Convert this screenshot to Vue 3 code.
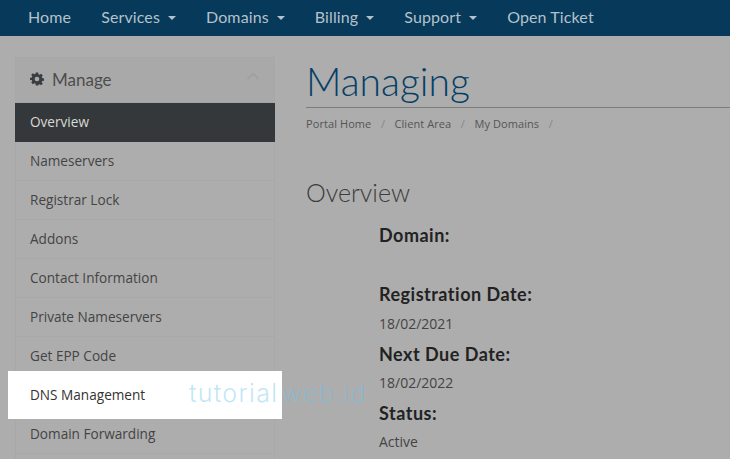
<script setup>
const nav = [
  { label: 'Home' },
  { label: 'Services', caret: true },
  { label: 'Domains', caret: true },
  { label: 'Billing', caret: true },
  { label: 'Support', caret: true },
  { label: 'Open Ticket' },
]
const items = ['Nameservers', 'Registrar Lock', 'Addons', 'Contact Information', 'Private Nameservers', 'Get EPP Code', 'DNS Management', 'Domain Forwarding']
const crumbs = ['Portal Home', 'Client Area', 'My Domains']
const details = [
  { label: 'Domain:', value: '' },
  { label: 'Registration Date:', value: '18/02/2021' },
  { label: 'Next Due Date:', value: '18/02/2022' },
  { label: 'Status:', value: 'Active' },
]
</script>

<template>
  <div class="page">
    <nav class="topnav">
      <a v-for="n in nav" :key="n.label" class="navlink">
        {{ n.label }}<span v-if="n.caret" class="caret"></span>
      </a>
    </nav>
    <div class="body">
      <aside class="side">
        <div class="panel-head">
          <svg class="gear" viewBox="0 0 24 24" width="14" height="14">
            <path fill="#3a3d40" fill-rule="evenodd" d="M10 1h4l.6 3.1 1.9.8 2.6-1.8 2.8 2.8-1.8 2.6.8 1.9 3.1.6v4l-3.1.6-.8 1.9 1.8 2.6-2.8 2.8-2.6-1.8-1.9.8L14 23h-4l-.6-3.1-1.9-.8-2.6 1.8-2.8-2.8 1.8-2.6-.8-1.9L0 14v-4l3.1-.6.8-1.9L2.1 4.9l2.8-2.8 2.6 1.8 1.9-.8zM12 8a4 4 0 1 0 0 8 4 4 0 0 0 0-8z"/>
          </svg>
          <span class="panel-title">Manage</span>
          <svg class="chev" viewBox="0 0 14 8" width="14" height="8">
            <path d="M1.5 7 7 1.8 12.5 7" fill="none" stroke="#a0a0a0" stroke-width="2"/>
          </svg>
        </div>
        <div class="item active">Overview</div>
        <div v-for="i in items" :key="i" class="item" :class="{ lit: i === 'DNS Management' }">
          <span>{{ i }}</span>
        </div>
      </aside>
      <main class="main">
        <h1 class="title">Managing</h1>
        <div class="crumbs">
          <template v-for="c in crumbs" :key="c">
            <span>{{ c }}</span><span class="sep">/</span>
          </template>
        </div>
        <h2 class="sub">Overview</h2>
        <div class="details">
          <div v-for="d in details" :key="d.label" class="detail">
            <div class="label">{{ d.label }}</div>
            <div class="value">{{ d.value }}</div>
          </div>
        </div>
      </main>
    </div>
    <div class="mark">tutorial web.id</div>
  </div>
</template>

<style>
html, body { margin: 0; background: #adadad; overflow: hidden; }
</style>

<style scoped>
.page { position: relative; width: 730px; height: 459px; overflow: hidden; background: #adadad; font-family: "Open Sans", sans-serif; color: #333; }
.topnav { height: 36px; background: #07395a; display: flex; align-items: center; padding-left: 28px; gap: 30px; }
.navlink { font-family: Lato, sans-serif; font-size: 16px; letter-spacing: .12px; color: #b4c2cb; display: flex; align-items: center; white-space: nowrap; padding-bottom: 3px; }
.caret { margin-left: 8px; margin-top: 3px; border-left: 4px solid transparent; border-right: 4px solid transparent; border-top: 4px solid #b4c2cb; }
.body { display: flex; padding: 21px 0 0 15px; gap: 31px; }
.side { width: 260px; flex: none; border-right: 1px solid #a8a8a8; border-left: 1px solid #a8a8a8; box-sizing: border-box; }
.panel-head { height: 46px; box-sizing: border-box; background: #a9a9a9; border-top: 1px solid #a6a6a6; display: flex; align-items: center; padding: 0 14px 2px; gap: 8px; border-bottom: 1px solid #a4a4a4; }
.panel-title { font-family: Lato, sans-serif; font-size: 17px; color: #4d4d4d; flex: 1; }
.chev { margin-bottom: 6px; }
.item { height: 39px; box-sizing: border-box; display: flex; align-items: center; padding: 0 0 2px 14px; font-size: 13.6px; color: #444; border-bottom: 1px solid #a8a8a8; }
.item.active { background: #35383a; color: #d8d8d8; margin: 0 -1px; padding-left: 15px; border-bottom: none; }
.item.lit { position: relative; z-index: 1; height: 48px; background: #fff; color: #333; margin: -5px -8px -4px -8px; padding-left: 22px; border: none; width: 274px; }
.main { flex: 1; min-width: 0; }
.title { margin: 0; height: 51px; box-sizing: border-box; font-family: Lato, sans-serif; font-weight: 300; font-size: 39px; line-height: 48px; color: #053f66; border-bottom: 1px solid #7c7c7c; }
.crumbs { margin-top: 8px; font-size: 11px; letter-spacing: .08px; line-height: 16px; color: #555; display: flex; gap: 9.5px; }
.sep { color: #888; }
.sub { margin: 44px 0 0; font-family: Lato, sans-serif; font-weight: 300; font-size: 25px; line-height: 32px; color: #3c3c3c; }
.details { margin: 15px 0 0 73px; }
.label { font-family: Lato, sans-serif; font-weight: 700; font-size: 18px; letter-spacing: .5px; line-height: 24px; color: #222; }
.value { font-size: 14px; line-height: 20px; min-height: 20px; color: #444; margin-top: 7.5px; }
.detail { margin-bottom: 7.8px; }
.mark { position: absolute; left: 189px; top: 378px; z-index: 2; font-family: Inter, sans-serif; font-weight: 300; font-size: 25px; letter-spacing: 1.3px; word-spacing: -5px; color: rgba(105, 195, 235, .42); white-space: nowrap; }
</style>
